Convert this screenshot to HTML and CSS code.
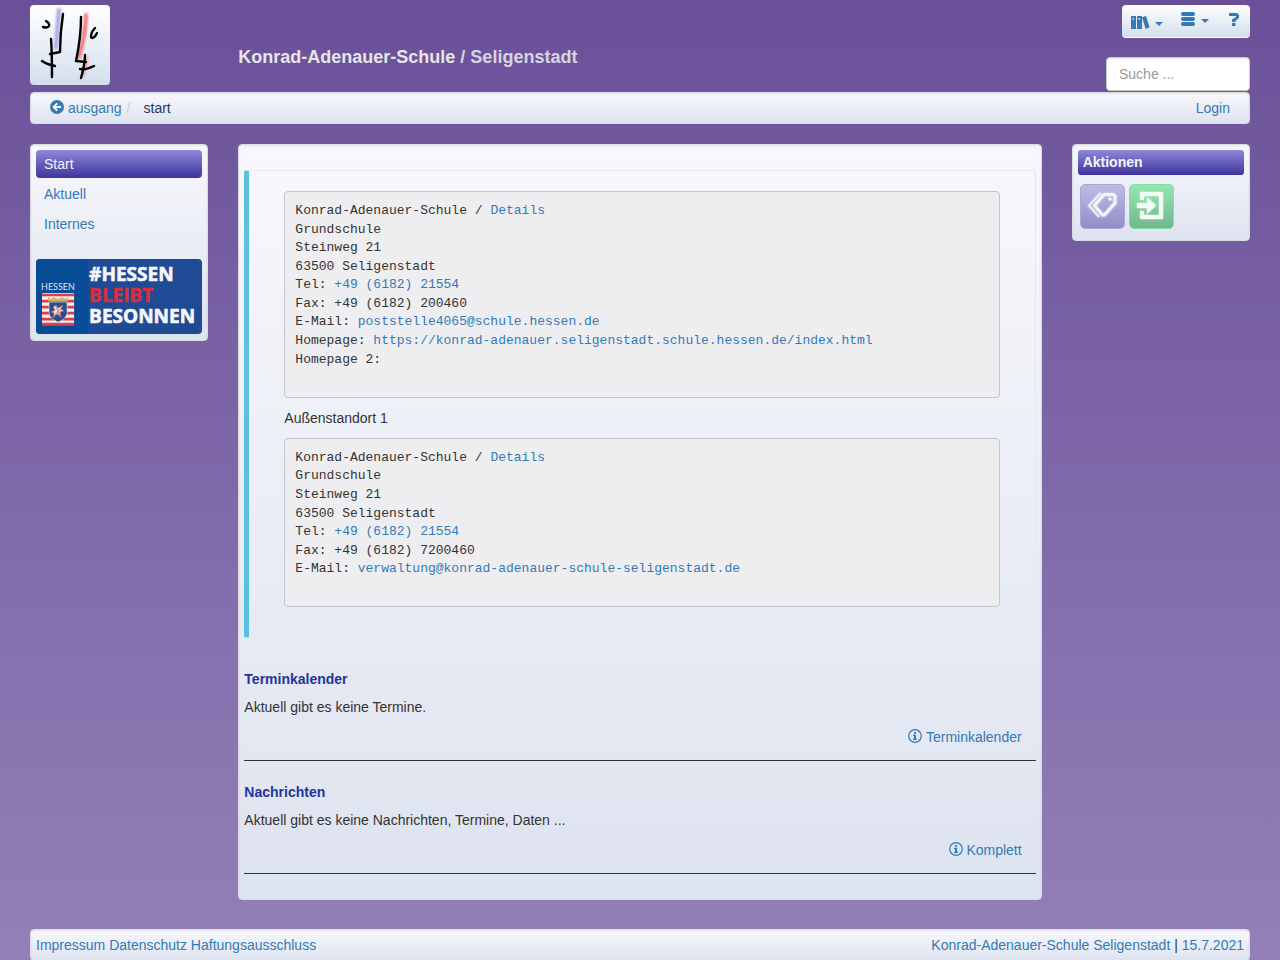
FILE: index.html
```html
<!DOCTYPE html>
<html lang="de">
<head>
  <meta charset="UTF-8">
  <meta name="viewport" content="width=device-width, initial-scale=1.0">
  <title>Konrad-Adenauer-Schule / Seligenstadt</title>
  <link rel="stylesheet" href="styles.css">
</head>
<body>

<header class="row header">
  <div class="col-side">
    <a class="logo" href="#" aria-label="Startseite">
      <svg width="80" height="80" viewBox="0 0 80 80" fill="none" stroke-linecap="round" stroke-linejoin="round">
        <defs><filter id="soft" x="-100%" y="-10%" width="300%" height="120%"><feGaussianBlur stdDeviation="1"/></filter></defs>
        <g filter="url(#soft)">
          <path d="M29 5C28 18 27 30 26 42" stroke="#adb0e5" stroke-width="4.500"/>
          <path d="M56 10C56 24 53 38 49 52" stroke="#f0787e" stroke-width="4"/>
          <path d="M57 53C56 60 55 66 53 71" stroke="#f3a0a6" stroke-width="2.500"/>
        </g>
        <g stroke="#000" stroke-width="2.4">
          <path d="M33 9C31 22 30 35 30 47L20 49"/>
          <path d="M21 34C22 47 22 60 22 72"/>
          <path d="M12 56C16 59 20 60 25 61"/>
          <path d="M16 16C21 19 20 24 13 22"/>
          <path d="M51 12C51 27 49 42 46 56L56 57"/>
          <path d="M55 50C55 58 53 66 51 73"/>
          <path d="M50 64C55 65 60 63 64 61"/>
          <path d="M65 23C61 27 60 33 62 33C65 33 66 30 67 28"/>
        </g>
      </svg>
    </a>
  </div>
  <h1 class="site-title">Konrad-Adenauer-Schule <span>/ Seligenstadt</span></h1>
  <div class="tools">
    <nav class="toolbar">
      <button type="button" class="tool tool-low" aria-label="Bibliothek">
        <svg width="20" height="14" viewBox="0 0 20 14" fill="currentColor">
          <path fill-rule="evenodd" d="M0 1h5v13H0zM1.500 3.200h1.500v1.600H1.500zM6 1h5v13H6zM7.500 3.200h1.500v1.600H7.500z"/>
          <path d="M11 2.200L15 1l3.600 11.500-4 1.300z"/>
        </svg>
        <span class="caret"></span>
      </button>
      <button type="button" class="tool" aria-label="Daten">
        <svg width="14" height="14" viewBox="0 0 14 14" fill="currentColor">
          <rect width="14" height="4" rx="2"/><rect y="5" width="14" height="4" rx="2"/><rect y="10" width="14" height="4" rx="2"/>
        </svg>
        <span class="caret"></span>
      </button>
      <button type="button" class="tool" aria-label="Hilfe">
        <svg width="10" height="14" viewBox="0 0 10 14" fill="currentColor">
          <path d="M0 1h8l2 2v3L6.500 9v1H3V7.500L7 5V4H0zM3 11h3.500v3H3z"/>
        </svg>
      </button>
    </nav>
    <input class="search" type="text" placeholder="Suche ..." aria-label="Suche">
  </div>
</header>

<nav class="box breadcrumb">
  <a href="#"><svg class="icon" viewBox="0 0 14 14"><circle cx="7" cy="7" r="7" fill="currentColor"/><path d="M7.200 3.300L3.600 7l3.600 3.700M4 7h7" fill="none" stroke="#fff" stroke-width="1.800"/></svg> ausgang</a>
  <span class="sep">/</span>
  <span class="current">start</span>
  <a class="login" href="#">Login</a>
</nav>

<div class="row content">
  <aside class="box col-side menu">
    <ul>
      <li><a class="active" href="#">Start</a></li>
      <li><a href="#">Aktuell</a></li>
      <li><a href="#">Internes</a></li>
    </ul>
    <a href="#" aria-label="Hessen bleibt besonnen">
      <svg class="banner" viewBox="0 0 166 75">
        <rect width="166" height="75" fill="#1f4a94"/>
        <rect width="52" height="75" fill="#084b96"/>
        <text class="banner-small" x="5" y="31">HESSEN</text>
        <rect x="6" y="34" width="32" height="32" fill="#f4eef0"/>
        <path d="M6 36h32M6 42h32M6 48h32M6 54h32M6 60h32M6 65h32" stroke="#d8404c" stroke-width="2.600"/>
        <path d="M12 38l3 2 3-2 4 2 4-2 3 2 3-2v4H12z" fill="#d6b45e"/>
        <path d="M13 43h18v10c0 5-4 8-9 10-5-2-9-5-9-10z" fill="#24508f" stroke="#eee" stroke-width=".6"/>
        <path d="M17 48l3-2 2 3 5-3-2 4 3 2-4 1 1 5-4-3-4 4 1-5-3-1 4-2zM20 47l4 11M26 48l-8 9" fill="#e7e5ec" stroke="#c65561" stroke-width=".8"/>
        <g class="banner-text">
          <text x="53" y="22">#HESSEN</text>
          <text class="red" x="53" y="43">BLEIBT</text>
          <text x="53" y="64">BESONNEN</text>
        </g>
      </svg>
    </a>
  </aside>

  <main class="box col-main">
    <div class="callout">
<pre>Konrad-Adenauer-Schule / <a href="#">Details</a>
Grundschule
Steinweg 21
63500 Seligenstadt
Tel: <a href="#">+49 (6182) 21554</a>
Fax: +49 (6182) 200460
E-Mail: <a href="#">poststelle4065@schule.hessen.de</a>
Homepage: <a href="#">https://konrad-adenauer.seligenstadt.schule.hessen.de/index.html</a>
Homepage 2:

</pre>
      <p>Außenstandort 1</p>
<pre>Konrad-Adenauer-Schule / <a href="#">Details</a>
Grundschule
Steinweg 21
63500 Seligenstadt
Tel: <a href="#">+49 (6182) 21554</a>
Fax: +49 (6182) 7200460
E-Mail: <a href="#">verwaltung@konrad-adenauer-schule-seligenstadt.de</a>

</pre>
    </div>

    <section class="news">
      <h2>Terminkalender</h2>
      <p>Aktuell gibt es keine Termine.</p>
      <p class="more"><a href="#"><svg class="icon" viewBox="0 0 14 14"><use href="#info"/></svg> Terminkalender</a></p>
    </section>
    <section class="news">
      <h2>Nachrichten</h2>
      <p>Aktuell gibt es keine Nachrichten, Termine, Daten ...</p>
      <p class="more"><a href="#"><svg class="icon" viewBox="0 0 14 14"><g id="info"><circle cx="7" cy="7" r="6.300" fill="none" stroke="currentColor" stroke-width="1.200"/><path d="M6 3h2v1.700H6zM5 5.700h3v4h1V11H5V9.700h1V7H5z" fill="currentColor"/></g></svg> Komplett</a></p>
    </section>
  </main>

  <aside class="box col-side">
    <h2 class="box-title">Aktionen</h2>
    <div class="actions">
      <button type="button" class="action" aria-label="Schlagworte">
        <svg width="32" height="32" viewBox="0 0 32 32" fill="none" stroke="#f4f3fc">
          <path d="M8.500 16.500L18 5.500h9.500l1.500 1.500v7L18.500 26h-2z" stroke-width="3" stroke-linejoin="round"/>
          <circle cx="24" cy="10" r="1.600" fill="#f4f3fc" stroke="none"/>
          <path d="M14.500 4L3 16.500 13 28" stroke-width="1.800"/>
        </svg>
      </button>
      <button type="button" class="action action-green" aria-label="Anmelden">
        <svg width="32" height="32" viewBox="0 0 32 32" fill="#f2fbf6">
          <path d="M6 3h21l1 1v25l-1 1H6l-1-1v-7h4v4h15V7H9v4H5V4z"/>
          <path d="M2 14h10V8l9 8.500-9 8.500v-6H2z"/>
        </svg>
      </button>
    </div>
  </aside>
</div>

<footer class="box footer">
  <div><a href="#">Impressum</a> <a href="#">Datenschutz</a> <a href="#">Haftungsausschluss</a></div>
  <div><a href="#">Konrad-Adenauer-Schule Seligenstadt</a> | <a href="#">15.7.2021</a></div>
</footer>

</body>
</html>
```
FILE: styles.css
```css
* { box-sizing: border-box; }
body { margin: 0; padding: 5px 30px 0; font: 14px/20px "Liberation Sans", Arial, sans-serif; color: #333; background: linear-gradient(#6a5099, #9480b8) no-repeat #9480b8; }
a { color: #337ab7; text-decoration: none; }
button { font: inherit; cursor: pointer; }
p { margin: 0 0 10px; }
svg { display: block; }
.icon { display: inline-block; width: 14px; height: 14px; vertical-align: -1px; }

.row { display: grid; grid-template-columns: repeat(12, 1fr); column-gap: 30px; align-items: start; }
.col-side { grid-column: span 2; }
.col-main { grid-column: span 8; }
.box { border: 1px solid #dcdce4; border-radius: 4px; padding: 5px; background: linear-gradient(#f8f8fc, #dde3ef); box-shadow: inset 0 1px 2px rgba(0,0,0,0.08); }

.header { height: 87px; }
.logo { display: block; width: 80px; height: 80px; border-radius: 4px; background: linear-gradient(#fff, #d3deee); }
.site-title { grid-column: span 7; margin: 42px 0 0; font-size: 18px; line-height: 20px; color: #e6e6e9; }
.site-title span { color: #d8d4e0; }
.tools { grid-column: span 3; display: flex; flex-direction: column; align-items: flex-end; gap: 19px; }
.toolbar { display: flex; gap: 18px; height: 33px; padding: 0 11px 0 9px; border-bottom: 1px solid #fff; border-radius: 4px; background: linear-gradient(#fff, #d3deee); }
.tool { display: flex; align-items: center; gap: 6px; height: 28px; padding: 0; border: 0; background: none; color: #337ab7; }
.tool:last-child { margin-left: 2px; }
.tool-low { height: 33px; gap: 4px; }
.caret { margin-top: 4px; border: 4px solid transparent; border-top-color: currentColor; border-bottom: 0; }
.search { width: 144px; height: 34px; padding: 6px 12px; border: 1px solid #ccc; border-radius: 4px; font: inherit; background: #fff; box-shadow: inset 0 1px 1px rgba(0,0,0,0.08); }
.search::placeholder { color: #999; opacity: 1; }

.breadcrumb { display: flex; padding: 5px 19px; margin-bottom: 20px; }
.sep { padding: 0 5px; color: #ccc; }
.current { padding-left: 8px; color: #2b3558; }
.login { margin-left: auto; }

.menu ul { list-style: none; margin: 0 0 21px; padding: 0; display: grid; gap: 2px; }
.menu li a { display: block; padding: 4px 8px; border-radius: 4px; }
.menu li .active, .box-title { color: #f4f2fa; background: linear-gradient(#8f88d8, #3c349c); }
.banner { width: 100%; border-radius: 4px; margin-bottom: 1px; }
.banner-small { font: 9px Lato, sans-serif; fill: #dce6f5; }
.banner-text { font: bold 19px "Open Sans", sans-serif; fill: #f6f6fa; stroke: #f6f6fa; stroke-width: 0.6; }
.banner-text .red { fill: #d5303f; stroke: #d5303f; }

.callout { margin: 20px 0 31px; padding: 20px 35px; border: 1px solid #e5e6ee; border-left: 5px solid #5bc0de; border-radius: 3px; }
pre { margin: 0 0 10px; padding: 10px 10px 9px; font: 13px/1.43 "Liberation Mono", monospace; color: #333; background: #eeeef0; border: 1px solid #c4c4cc; border-radius: 4px; white-space: pre-wrap; overflow-wrap: anywhere; }
.news { border-bottom: 1px solid #333; margin-bottom: 21px; padding-bottom: 13px; }
.news:last-child { margin-bottom: 20px; }
.news h2 { margin: 0 0 8px; font-size: 14px; line-height: 20px; color: #23349c; }
.more { margin: 0; padding-right: 14px; text-align: right; }

.box-title { margin: 0; padding: 2px 5px 3px; border-radius: 3px; font-size: 14px; line-height: 20px; }
.actions { display: flex; gap: 4px; padding: 9px 2px 6px; }
.action { display: grid; place-items: center; width: 45px; height: 45px; padding: 0 0 4px; border: 1px solid #aaa5dd; border-radius: 5px; background: linear-gradient(#bdbbe4, #908fc9); }
.action svg { filter: drop-shadow(0 0 1px rgba(255,255,255,0.7)); }
.action-green { border-color: #7fe0a4; background: linear-gradient(#90e8b0, #74b48e); }

.footer { display: flex; justify-content: space-between; margin-top: 29px; }
```
